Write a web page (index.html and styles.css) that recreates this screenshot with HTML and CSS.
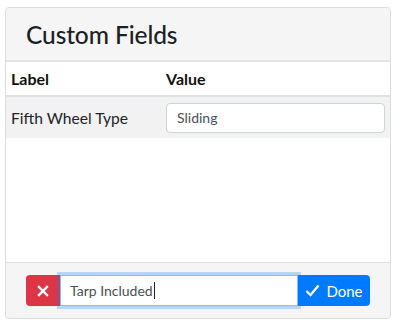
FILE: index.html
```html
<!DOCTYPE html>
<html>
<head>
<meta charset="utf-8">
<link rel="stylesheet" href="styles.css">
</head>
<body>
<div class="card">
  <div class="card-header"><h2 class="title">Custom Fields</h2></div>
  <div class="card-body">
    <table class="fields">
      <thead>
        <tr><th class="col-label">Label</th><th class="col-value">Value</th></tr>
      </thead>
      <tbody>
        <tr class="striped">
          <td class="col-label">Fifth Wheel Type</td>
          <td class="col-value"><div class="field-input">Sliding</div></td>
        </tr>
      </tbody>
    </table>
  </div>
  <div class="card-footer">
    <div class="input-group">
      <button class="btn btn-danger" type="button">
        <svg width="12" height="12" viewBox="0 0 12 12"><path d="M2 2 L10 10 M10 2 L2 10" stroke="#fff" stroke-width="2.4" stroke-linecap="square"/></svg>
      </button>
      <div class="new-input"><span class="typed">Tarp Included</span><span class="caret"></span></div>
      <button class="btn btn-primary" type="button">
        <svg width="15" height="13" viewBox="0 0 15 13"><path d="M1.5 7 L5.5 11 L13.5 1.5" fill="none" stroke="#fff" stroke-width="2.2"/></svg>
        <span>Done</span>
      </button>
    </div>
  </div>
</div>
</body>
</html>
```
FILE: styles.css
```css
* { box-sizing: border-box; }
html, body { margin: 0; padding: 0; background: #fff; }
body {
  font-family: "Lato", "Open Sans", sans-serif;
  color: #212529;
  width: 395px;
  height: 322px;
  overflow: hidden;
}
.card {
  margin: 7px 5px 0 5px;
  width: 386px;
  height: 312px;
  border: 1px solid #dcdcdc;
  border-radius: 4px;
  display: flex;
  flex-direction: column;
  overflow: hidden;
}
.card-header {
  background: #f5f5f5;
  height: 54px;
  border-bottom: 2px solid #e3e3e3;
  display: flex;
  align-items: center;
  padding: 0 20px;
}
.title {
  margin: 0;
  font-size: 24.5px;
  font-weight: 500;
  color: #1b1f27;
  letter-spacing: -0.1px;
}
.card-body {
  flex: 1;
  background: #fff;
}
.fields {
  width: 100%;
  border-collapse: collapse;
}
.fields th {
  text-align: left;
  font-weight: 700;
  font-size: 16px;
  height: 34px;
  padding: 0 5px;
  border-bottom: 2px solid #dee2e6;
  color: #111;
}
.fields td {
  font-size: 15.6px;
  height: 42px;
  padding: 0 5px;
  vertical-align: middle;
}
.col-label { width: 155px; }
.striped { background: #f2f2f2; }
.field-input {
  width: 219px;
  height: 30px;
  background: #fff;
  border: 1px solid #ced4da;
  border-radius: 4px;
  font-size: 14px;
  color: #495057;
  display: flex;
  align-items: center;
  padding: 0 10px;
}
.card-footer {
  background: #f5f5f5;
  border-top: 1px solid #dedede;
  height: 56px;
  padding: 12px 20px 0 20px;
}
.input-group {
  display: flex;
  height: 31px;
}
.btn {
  border: none;
  font-family: inherit;
  color: #fff;
  display: flex;
  align-items: center;
  justify-content: center;
  padding: 0;
  cursor: pointer;
}
.btn-danger {
  background: #dc3545;
  width: 34px;
  border-radius: 4px 0 0 4px;
}
.btn-primary {
  background: #007bff;
  width: 72px;
  border-radius: 0 4px 4px 0;
  gap: 6px;
  font-size: 15px;
}
.new-input {
  flex: 1;
  background: #fff;
  border: 1px solid #80bdff;
  box-shadow: 0 0 0 3px rgba(0, 123, 255, 0.25);
  display: flex;
  align-items: center;
  padding: 0 9px;
  font-size: 14px;
  color: #495057;
  position: relative;
  z-index: 1;
}
.caret {
  display: inline-block;
  width: 1px;
  height: 17px;
  background: #222;
  margin-left: 1px;
}
```
